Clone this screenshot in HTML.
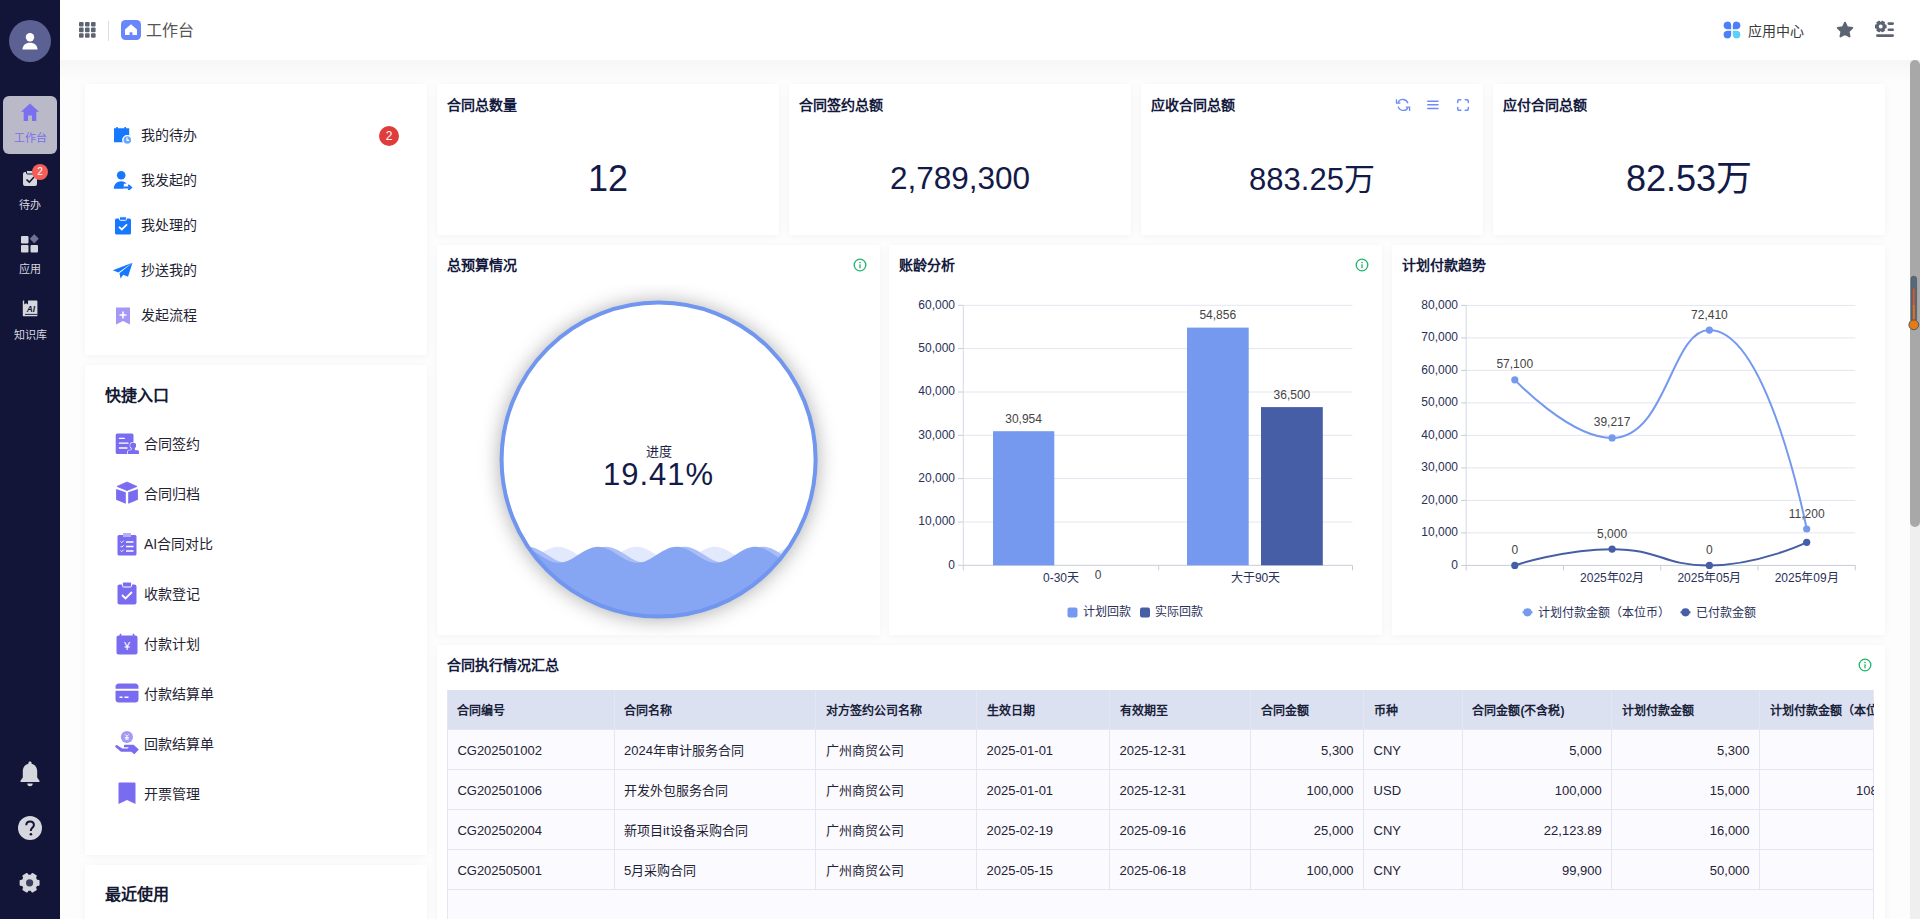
<!DOCTYPE html>
<html lang="zh-CN"><head><meta charset="utf-8"><title>工作台</title>
<style>
*{box-sizing:border-box;margin:0;padding:0}
html,body{width:1920px;height:919px;overflow:hidden;background:#fff;font-family:"Liberation Sans", sans-serif;color:#1b1f3b}
.abs{position:absolute}
.card{position:absolute;background:#fff;box-shadow:0 1px 8px rgba(0,0,0,0.045)}
.t{position:absolute;white-space:nowrap;line-height:1}
</style></head><body>

<div class="abs" style="left:60px;top:60px;width:1850px;height:859px;background:#fdfdfd"></div>
<div class="abs" style="left:60px;top:60px;width:1850px;height:22px;background:linear-gradient(#f6f6f7,rgba(253,253,253,0))"></div>
<div class="abs" style="left:60px;top:0;width:1860px;height:60px;background:#fff"></div>
<div class="card" style="left:85px;top:84px;width:342px;height:271px"></div>
<div class="card" style="left:85px;top:365px;width:342px;height:490px"></div>
<div class="card" style="left:85px;top:865px;width:342px;height:80px"></div>
<div class="card" style="left:437px;top:84px;width:342px;height:151px"></div>
<div class="card" style="left:789px;top:84px;width:342px;height:151px"></div>
<div class="card" style="left:1141px;top:84px;width:342px;height:151px"></div>
<div class="card" style="left:1493px;top:84px;width:392px;height:151px"></div>
<div class="card" style="left:437px;top:245px;width:443px;height:390px"></div>
<div class="card" style="left:889px;top:245px;width:493px;height:390px"></div>
<div class="card" style="left:1392px;top:245px;width:493px;height:390px"></div>
<div class="card" style="left:437px;top:645px;width:1448px;height:300px"></div>
<div class="abs" style="left:0;top:0;width:60px;height:919px;background:#121538"></div>
<div class="abs" style="left:9px;top:20px;width:42px;height:42px;border-radius:50%;background:#5b6192"></div>
<svg class="abs" style="left:20px;top:31px" width="20" height="20" viewBox="0 0 20 20">
<circle cx="10" cy="6.2" r="4.2" fill="#fff"/><path d="M2.5 18.5c0-4.2 3.3-6.8 7.5-6.8s7.5 2.6 7.5 6.8z" fill="#fff"/></svg>
<div class="abs" style="left:3px;top:96px;width:54px;height:58px;border-radius:6px;background:#b9b9c7"></div>
<svg class="abs" style="left:20px;top:102px" width="20" height="20" viewBox="0 0 20 20">
<path d="M10 1.5 L19 9.8 H16.3 V19 H12 V13.5 H8 V19 H3.7 V9.8 H1z" fill="#7a6ff0"/></svg>
<div class="t" style="left:0;width:60px;text-align:center;top:133px;font-size:11px;color:#7a6ff0">工作台</div>
<svg class="abs" style="left:22px;top:169px" width="17" height="18" viewBox="0 0 17 18">
<rect x="1" y="3" width="14" height="14" rx="2" fill="#d5d6de"/><rect x="4.5" y="1.5" width="7" height="3.5" rx="1" fill="#d5d6de" stroke="#121538" stroke-width="1"/>
<path d="M4.5 10.5 L7.3 13.2 L12 8" stroke="#121538" stroke-width="1.6" fill="none"/></svg>
<div class="abs" style="left:32px;top:164px;width:16px;height:16px;border-radius:50%;background:#f25f58"></div>
<div class="t" style="left:32px;width:16px;text-align:center;top:167px;font-size:10px;color:#fff">2</div>
<div class="t" style="left:0;width:60px;text-align:center;top:200px;font-size:11px;color:#d8d8e0">待办</div>
<svg class="abs" style="left:20px;top:234px" width="20" height="19" viewBox="0 0 20 19">
<rect x="1" y="2" width="7.5" height="7.5" rx="1" fill="#d5d6de"/><rect x="11" y="1.5" width="6.5" height="6.5" rx="0.5" transform="rotate(45 14.25 4.75)" fill="#6f7292"/>
<rect x="1" y="11" width="7.5" height="7.5" rx="1" fill="#d5d6de"/><rect x="10.5" y="11" width="7.5" height="7.5" rx="1" fill="#d5d6de"/></svg>
<div class="t" style="left:0;width:60px;text-align:center;top:264px;font-size:11px;color:#d8d8e0">应用</div>
<svg class="abs" style="left:22px;top:300px" width="16" height="17" viewBox="0 0 16 17">
<path d="M.8 1.2A.6.6 0 0 1 1.4.6H2.2V4.6L4.1 3.2 6 4.6V.6H14.8A.6.6 0 0 1 15.4 1.2V15.6A.6.6 0 0 1 14.8 16.2H1.4A.6.6 0 0 1 .8 15.6z" fill="#d5d6de"/>
<rect x="3" y="13.9" width="12.4" height="0.9" fill="#121538"/>
<text x="8.9" y="11.9" font-family="Liberation Sans" font-weight="bold" font-style="italic" font-size="8.3" fill="#121538" text-anchor="middle">AI</text></svg>
<div class="t" style="left:0;width:60px;text-align:center;top:330px;font-size:11px;color:#d8d8e0">知识库</div>
<svg class="abs" style="left:19px;top:760px" width="22" height="27" viewBox="0 0 22 27">
<path d="M11 1.5c1 0 1.6.7 1.6 1.6v.6c3.6.9 5.6 3.9 5.6 7.6v6.2l2.3 3.2v1.3H1.5v-1.3l2.3-3.2v-6.2c0-3.7 2-6.7 5.6-7.6v-.6c0-.9.6-1.6 1.6-1.6z" fill="#d5d6de"/>
<path d="M8.3 23.5h5.4a2.7 2.7 0 0 1-5.4 0z" fill="#d5d6de"/></svg>
<svg class="abs" style="left:18px;top:816px" width="24" height="24" viewBox="0 0 24 24">
<circle cx="12" cy="12" r="12" fill="#d5d6de"/>
<path d="M8.3 9.3c0-2.3 1.6-3.8 3.8-3.8s3.8 1.5 3.8 3.5c0 2.6-3 2.9-3 5.3v.6" stroke="#121538" stroke-width="2" fill="none"/><circle cx="12.9" cy="18.2" r="1.3" fill="#121538"/></svg>
<svg class="abs" style="left:18px;top:871px" width="24" height="24" viewBox="0 0 24 24"><polygon points="20.76,9.69 20.76,13.91 18.60,14.21 17.18,16.65 18.01,18.67 14.35,20.79 13.01,19.06 10.19,19.06 8.85,20.79 5.19,18.67 6.02,16.65 4.60,14.21 2.44,13.91 2.44,9.69 4.60,9.39 6.02,6.95 5.19,4.93 8.85,2.81 10.19,4.54 13.01,4.54 14.35,2.81 18.01,4.93 17.18,6.95 18.60,9.39" fill="#d5d6de" stroke="#d5d6de" stroke-width="1.6" stroke-linejoin="round"/><circle cx="11.6" cy="11.8" r="3.6" fill="#3b3e5e"/></svg>
<svg class="abs" style="left:78.5px;top:22px" width="17" height="16" viewBox="0 0 17 16"><rect x="0" y="0.0" width="4.6" height="4.6" rx="1" fill="#5c6372"/><rect x="6" y="0.0" width="4.6" height="4.6" rx="1" fill="#5c6372"/><rect x="12" y="0.0" width="4.6" height="4.6" rx="1" fill="#5c6372"/><rect x="0" y="5.6" width="4.6" height="4.6" rx="1" fill="#5c6372"/><rect x="6" y="5.6" width="4.6" height="4.6" rx="1" fill="#5c6372"/><rect x="12" y="5.6" width="4.6" height="4.6" rx="1" fill="#5c6372"/><rect x="0" y="11.2" width="4.6" height="4.6" rx="1" fill="#5c6372"/><rect x="6" y="11.2" width="4.6" height="4.6" rx="1" fill="#5c6372"/><rect x="12" y="11.2" width="4.6" height="4.6" rx="1" fill="#5c6372"/></svg>
<div class="abs" style="left:108px;top:21px;width:1px;height:20px;background:#dedede"></div>
<svg class="abs" style="left:121px;top:20px" width="20" height="20" viewBox="0 0 20 20">
<rect width="20" height="20" rx="4.5" fill="#6a86fb"/><path d="M10 4.3 L16 9.4 V15 H11.4 V12.2 H8.6 V15 H4 V9.4z" fill="#fff"/></svg>
<div class="t" style="left:146px;top:22.5px;font-size:16px;color:#555">工作台</div>
<svg class="abs" style="left:1723px;top:21px" width="18" height="18" viewBox="0 0 18 18">
<path d="M8.2 8.2H4A3.8 3.8 0 1 1 8.2 4z" fill="#4f7ff8"/><path d="M9.8 8.2H14A3.8 3.8 0 1 0 9.8 4z" fill="#4f7ff8"/>
<path d="M8.2 9.8H4A3.8 3.8 0 1 0 8.2 14z" fill="#4f7ff8"/><path d="M9.8 9.8H14A3.8 3.8 0 1 1 9.8 14z" fill="#5ccffa"/></svg>
<div class="t" style="left:1748px;top:24px;font-size:14px;color:#3a3a3a">应用中心</div>
<svg class="abs" style="left:1836px;top:21px" width="18" height="18" viewBox="0 0 24 24">
<path d="M12 2.2l2.9 6.2 6.8.8-5 4.7 1.3 6.7L12 17.3l-6 3.3 1.3-6.7-5-4.7 6.8-.8z" fill="#5c6372" stroke="#5c6372" stroke-width="2.6" stroke-linejoin="round"/></svg>
<svg class="abs" style="left:1875px;top:20px" width="20" height="19" viewBox="0 0 20 19">
<polygon points="10.77,5.33 10.77,7.67 9.58,7.83 8.79,9.19 9.25,10.30 7.22,11.47 6.48,10.52 4.92,10.52 4.18,11.47 2.15,10.30 2.61,9.19 1.82,7.83 0.63,7.67 0.63,5.33 1.82,5.17 2.61,3.81 2.15,2.70 4.18,1.53 4.92,2.48 6.48,2.48 7.22,1.53 9.25,2.70 8.79,3.81 9.58,5.17" fill="#5c6372" stroke="#5c6372" stroke-width="1.6" stroke-linejoin="round"/><circle cx="5.7" cy="6.5" r="1.9" fill="#fff"/>
<rect x="12.5" y="2.3" width="6.5" height="2.6" rx="1.3" fill="#5c6372"/><rect x="12.5" y="8.5" width="6.5" height="2.6" rx="1.3" fill="#5c6372"/>
<rect x="1" y="14.2" width="18" height="2.8" rx="1.4" fill="#5c6372"/></svg>
<div class="abs" style="left:1910px;top:60px;width:10px;height:859px;background:#efefef"></div>
<div class="abs" style="left:1910px;top:60px;width:10px;height:467px;border-radius:5px;background:#a8a8a8"></div>
<svg class="abs" style="left:1906px;top:275px" width="14" height="57" viewBox="0 0 14 57">
<rect x="5" y="1.2" width="5.6" height="46" rx="2.8" fill="#56687a" stroke="#4a5a6a" stroke-width="0.8"/>
<path d="M6.9 13.5h1.8V47H6.9z" fill="#e4541e"/><path d="M6.9 30h1.8V47H6.9z" fill="#e8700f"/>
<circle cx="7.8" cy="49.8" r="4.9" fill="#e97a0d" stroke="#4a5a6a" stroke-width="1"/></svg>
<svg class="abs" style="left:113px;top:126px" width="20" height="19" viewBox="0 0 20 19">
<path d="M1 2.2h2.2V1h1.6v1.2h6.6V1H13v1.2h3.2v7.3a5 5 0 0 0-6.3 6.8H1z" fill="#1677ff"/>
<circle cx="14.3" cy="14" r="4.4" fill="#6aa6ff" stroke="#fff" stroke-width="1.2"/><path d="M14 11.6v2.8h2" stroke="#fff" stroke-width="1.1" fill="none"/></svg>
<svg class="abs" style="left:113px;top:170px" width="20" height="20" viewBox="0 0 20 20">
<circle cx="8.2" cy="5.2" r="4.3" fill="#1677ff"/><path d="M0.8 18.8c0-4.5 3.2-7.6 7.4-7.6 2.4 0 4.3.9 5.6 2.4l-3 .2v5z" fill="#1677ff"/>
<path d="M11.5 17.5h6.5M15.8 15.4l2.4 2.1-2.4 2.1" stroke="#1677ff" stroke-width="1.8" fill="none" stroke-linecap="round"/></svg>
<svg class="abs" style="left:114px;top:216px" width="18" height="19" viewBox="0 0 18 19">
<rect x="1" y="2.5" width="16" height="16" rx="1.5" fill="#1677ff"/><rect x="5.5" y="0.8" width="7" height="3.5" rx="1" fill="#1677ff" stroke="#fff" stroke-width="1"/>
<path d="M5 10.8l2.8 2.7 5.2-5.2" stroke="#fff" stroke-width="1.8" fill="none"/></svg>
<svg class="abs" style="left:112px;top:262px" width="21" height="17" viewBox="0 0 21 17">
<path d="M20.5 0.8L0.8 8.3l5.6 2.2z" fill="#1677ff"/><path d="M20.5 0.8L7.4 11.2l1.2 5.2 2.6-3.6 4.8 1.9z" fill="#1677ff"/></svg>
<svg class="abs" style="left:115px;top:306px" width="16" height="19" viewBox="0 0 16 19">
<path d="M1 1.5h14v17l-7-3.6-7 3.6z" fill="#a597f6"/><path d="M8 5.5v7M4.5 9h7" stroke="#fff" stroke-width="1.6"/></svg>
<div class="t" style="left:141px;top:127px;font-size:14px;line-height:16px;color:#1f2333">我的待办</div>
<div class="t" style="left:141px;top:172px;font-size:14px;line-height:16px;color:#1f2333">我发起的</div>
<div class="t" style="left:141px;top:217px;font-size:14px;line-height:16px;color:#1f2333">我处理的</div>
<div class="t" style="left:141px;top:262px;font-size:14px;line-height:16px;color:#1f2333">抄送我的</div>
<div class="t" style="left:141px;top:307px;font-size:14px;line-height:16px;color:#1f2333">发起流程</div>
<div class="abs" style="left:379px;top:126px;width:20px;height:20px;border-radius:50%;background:#e03c3c"></div>
<div class="t" style="left:379px;width:20px;text-align:center;top:129px;font-size:12px;line-height:14px;color:#fff">2</div>
<div class="t" style="left:105px;top:386px;font-size:16px;line-height:20px;font-weight:bold;color:#141833">快捷入口</div>
<svg class="abs" style="left:115px;top:433px" width="25" height="23" viewBox="0 0 25 23">
<rect x="0.7" y="0.4" width="17.8" height="20.6" rx="1.5" fill="#7a6cf0"/>
<path d="M4.4 5.3h5M4.4 10.2h8.6M4.4 15h7.6" stroke="#fff" stroke-width="1.3" stroke-linecap="round"/>
<g fill="#7a6cf0" stroke="#fff" stroke-width="1.5" paint-order="stroke"><circle cx="18.2" cy="12.6" r="2.8"/>
<path d="M16.8 15.2h2.8l.5 2.2h2.5a1.3 1.3 0 0 1 1.3 1.3v2.3H13v-2.3a1.3 1.3 0 0 1 1.3-1.3h2.2z"/></g>
<circle cx="18.2" cy="12.6" r="2.8" fill="#7a6cf0"/><path d="M16.8 15.2h2.8l.5 2.2h2.5a1.3 1.3 0 0 1 1.3 1.3v2.3H13v-2.3a1.3 1.3 0 0 1 1.3-1.3h2.2z" fill="#7a6cf0"/></svg>
<svg class="abs" style="left:110px;top:475px" width="35" height="35" viewBox="0 0 35 35">
<path d="M17 7L27 11.4 17 15.6 7 11.4z" fill="#7a6cf0" stroke="#7a6cf0" stroke-width="0.8" stroke-linejoin="round"/>
<path d="M6.1 13.9L15.8 17.3V28.8L6.1 24.8z" fill="#7a6cf0"/><path d="M27.9 13.9L18.2 17.3V28.8l9.7-4z" fill="#7a6cf0"/></svg>
<svg class="abs" style="left:117px;top:532px" width="20" height="24" viewBox="0 0 20 24">
<rect x="0.5" y="3" width="19" height="20.5" rx="1.5" fill="#7a6cf0"/><path d="M6 1h8v4H6z" fill="#b7aef7"/>
<path d="M3.5 9.5l1.2 1.2 2-2M3.5 14l1.2 1.2 2-2M3.5 18.5l1.2 1.2 2-2" stroke="#fff" stroke-width="1" fill="none"/>
<path d="M9 10h7.5M9 14.5h7.5M9 19h7.5" stroke="#fff" stroke-width="1.3"/></svg>
<svg class="abs" style="left:117px;top:581px" width="20" height="24" viewBox="0 0 20 24">
<rect x="0.5" y="3.5" width="19" height="20" rx="2" fill="#7a6cf0"/><rect x="5.5" y="1" width="9" height="5" rx="1.2" fill="#7a6cf0" stroke="#fff" stroke-width="1"/>
<path d="M5 14l3.5 3.5 6.5-6.5" stroke="#fff" stroke-width="1.8" fill="none"/></svg>
<svg class="abs" style="left:116px;top:633px" width="22" height="22" viewBox="0 0 22 22">
<rect x="0.5" y="2.5" width="21" height="19" rx="2" fill="#7a6cf0"/><path d="M4.5 0.8v3.5M17.5 0.8v3.5" stroke="#7a6cf0" stroke-width="1.6"/>
<text x="11" y="17.3" font-family="Liberation Sans" font-size="11" fill="#fff" text-anchor="middle">¥</text></svg>
<svg class="abs" style="left:115px;top:683px" width="24" height="20" viewBox="0 0 24 20">
<path d="M0.5 4a3.5 3.5 0 0 1 3.5-3.5h16a3.5 3.5 0 0 1 3.5 3.5v1.8H0.5z" fill="#7a6cf0"/>
<path d="M0.5 7.8h23V16a3.5 3.5 0 0 1-3.5 3.5H4A3.5 3.5 0 0 1 .5 16z" fill="#7a6cf0"/>
<path d="M4.5 14.3h3M9.5 14.3h4" stroke="#fff" stroke-width="1.5"/></svg>
<svg class="abs" style="left:110px;top:725px" width="35" height="35" viewBox="0 0 35 35">
<circle cx="16.9" cy="12" r="6.1" fill="#a39af5"/><path d="M15 9.3l1.9 2.1 1.9-2.1M16.9 11.4v3.6M14.9 12.5h4M14.9 14.1h4" stroke="#fff" stroke-width="0.9" fill="none"/>
<path d="M14.8 19.8H23.6L28.9 24.4 24.4 29.3 21.3 26.8H11L5.6 22.2A1.3 1.3 0 0 1 7.2 20.2L12.2 23.6H17.9L18.7 22.3H15.5A1.25 1.25 0 0 1 14.8 19.8z" fill="#7a6cf0"/></svg>
<svg class="abs" style="left:118px;top:782px" width="18" height="23" viewBox="0 0 18 23">
<path d="M0.5 1.5A1 1 0 0 1 1.5 .5h15a1 1 0 0 1 1 1V22l-8.5-4-8.5 4z" fill="#7a6cf0"/></svg>
<div class="t" style="left:144px;top:436px;font-size:14px;line-height:16px;color:#1f2333">合同签约</div>
<div class="t" style="left:144px;top:486px;font-size:14px;line-height:16px;color:#1f2333">合同归档</div>
<div class="t" style="left:144px;top:536px;font-size:14px;line-height:16px;color:#1f2333">AI合同对比</div>
<div class="t" style="left:144px;top:586px;font-size:14px;line-height:16px;color:#1f2333">收款登记</div>
<div class="t" style="left:144px;top:636px;font-size:14px;line-height:16px;color:#1f2333">付款计划</div>
<div class="t" style="left:144px;top:686px;font-size:14px;line-height:16px;color:#1f2333">付款结算单</div>
<div class="t" style="left:144px;top:736px;font-size:14px;line-height:16px;color:#1f2333">回款结算单</div>
<div class="t" style="left:144px;top:786px;font-size:14px;line-height:16px;color:#1f2333">开票管理</div>
<div class="t" style="left:105px;top:885px;font-size:16px;line-height:20px;font-weight:bold;color:#141833">最近使用</div>
<div class="t" style="left:447px;top:97px;font-size:14px;line-height:16px;font-weight:bold;color:#141a3d">合同总数量</div>
<div class="t" style="left:437px;width:342px;text-align:center;top:161.3px;font-size:36px;line-height:36px;color:#131a48">12</div>
<div class="t" style="left:799px;top:97px;font-size:14px;line-height:16px;font-weight:bold;color:#141a3d">合同签约总额</div>
<div class="t" style="left:789px;width:342px;text-align:center;top:163.1px;font-size:31.5px;line-height:31.5px;color:#131a48">2,789,300</div>
<div class="t" style="left:1151px;top:97px;font-size:14px;line-height:16px;font-weight:bold;color:#141a3d">应收合同总额</div>
<div class="t" style="left:1141px;width:342px;text-align:center;top:163.6px;font-size:31px;line-height:31px;color:#131a48">883.25万</div>
<div class="t" style="left:1503px;top:97px;font-size:14px;line-height:16px;font-weight:bold;color:#141a3d">应付合同总额</div>
<div class="t" style="left:1493px;width:392px;text-align:center;top:161.2px;font-size:36px;line-height:36px;color:#131a48">82.53万</div>
<svg class="abs" style="left:1395px;top:98px" width="16" height="14" viewBox="0 0 16 14">
<path d="M12.9 5.2A5.3 5.3 0 0 0 3.2 4.2M3.2 8.6A5.3 5.3 0 0 0 13 9.6" stroke="#6f8bf8" stroke-width="1.3" fill="none"/>
<path d="M1.5 1.2v3.8h3.8M14.6 13v-3.8h-3.8" stroke="#6f8bf8" stroke-width="1.3" fill="none"/></svg>
<svg class="abs" style="left:1426px;top:98px" width="14" height="14" viewBox="0 0 14 14">
<path d="M1.8 3.3h10.2M1.8 6.7h10.2M1.8 10.4h10.2" stroke="#6f8bf8" stroke-width="1.5" stroke-linecap="round"/></svg>
<svg class="abs" style="left:1456px;top:98px" width="14" height="14" viewBox="0 0 14 14">
<path d="M1.7 4.5V3.2a1.5 1.5 0 0 1 1.5-1.5h1.6M9.2 1.7h1.6a1.5 1.5 0 0 1 1.5 1.5v1.3M12.3 9.5v1.3a1.5 1.5 0 0 1-1.5 1.5H9.2M4.8 12.3H3.2a1.5 1.5 0 0 1-1.5-1.5V9.5" stroke="#6f8bf8" stroke-width="1.5" fill="none" stroke-linecap="round"/></svg>
<div class="t" style="left:447px;top:257px;font-size:14px;line-height:16px;font-weight:bold;color:#141a3d">总预算情况</div>
<div class="t" style="left:899px;top:257px;font-size:14px;line-height:16px;font-weight:bold;color:#141a3d">账龄分析</div>
<div class="t" style="left:1402px;top:257px;font-size:14px;line-height:16px;font-weight:bold;color:#141a3d">计划付款趋势</div>
<div class="t" style="left:447px;top:657px;font-size:14px;line-height:16px;font-weight:bold;color:#141a3d">合同执行情况汇总</div>
<svg class="abs" style="left:853px;top:258px" width="14" height="14" viewBox="0 0 14 14">
<circle cx="7" cy="7" r="5.8" stroke="#1fb46e" stroke-width="1.3" fill="none"/><circle cx="7" cy="4.6" r="0.8" fill="#1fb46e"/><path d="M7 6.3v4" stroke="#1fb46e" stroke-width="1.3"/></svg>
<svg class="abs" style="left:1355px;top:258px" width="14" height="14" viewBox="0 0 14 14">
<circle cx="7" cy="7" r="5.8" stroke="#1fb46e" stroke-width="1.3" fill="none"/><circle cx="7" cy="4.6" r="0.8" fill="#1fb46e"/><path d="M7 6.3v4" stroke="#1fb46e" stroke-width="1.3"/></svg>
<svg class="abs" style="left:1858px;top:658px" width="14" height="14" viewBox="0 0 14 14">
<circle cx="7" cy="7" r="5.8" stroke="#1fb46e" stroke-width="1.3" fill="none"/><circle cx="7" cy="4.6" r="0.8" fill="#1fb46e"/><path d="M7 6.3v4" stroke="#1fb46e" stroke-width="1.3"/></svg>
<svg class="abs" style="left:0;top:0" width="1920" height="919" viewBox="0 0 1920 919"><defs><clipPath id="lc"><circle cx="658.6" cy="459.6" r="156"/></clipPath><filter id="sh" x="-30%" y="-30%" width="160%" height="160%"><feGaussianBlur stdDeviation="10"/></filter><clipPath id="shc"><rect x="437" y="284.6" width="443" height="350"/></clipPath></defs>
<g clip-path="url(#shc)"><circle cx="658.6" cy="460.6" r="159" fill="rgba(0,0,0,0.32)" filter="url(#sh)"/></g>
<circle cx="658.6" cy="459.6" r="158" fill="#fff"/>
<g clip-path="url(#lc)">
<path d="M490,640 L490.0,549.46 L492.0,550.48 L494.0,551.61 L496.0,552.82 L498.0,554.08 L500.0,555.36 L502.0,556.62 L504.0,557.84 L506.0,558.98 L508.0,560.02 L510.0,560.92 L512.0,561.66 L514.0,562.23 L516.0,562.61 L518.0,562.79 L520.0,562.76 L522.0,562.53 L524.0,562.10 L526.0,561.49 L528.0,560.71 L530.0,559.77 L532.0,558.71 L534.0,557.54 L536.0,556.31 L538.0,555.04 L540.0,553.76 L542.0,552.51 L544.0,551.32 L546.0,550.22 L548.0,549.23 L550.0,548.38 L552.0,547.70 L554.0,547.21 L556.0,546.90 L558.0,546.80 L560.0,546.90 L562.0,547.21 L564.0,547.70 L566.0,548.38 L568.0,549.23 L570.0,550.22 L572.0,551.32 L574.0,552.51 L576.0,553.76 L578.0,555.04 L580.0,556.31 L582.0,557.54 L584.0,558.71 L586.0,559.77 L588.0,560.71 L590.0,561.49 L592.0,562.10 L594.0,562.53 L596.0,562.76 L598.0,562.79 L600.0,562.61 L602.0,562.23 L604.0,561.66 L606.0,560.92 L608.0,560.02 L610.0,558.98 L612.0,557.84 L614.0,556.62 L616.0,555.36 L618.0,554.08 L620.0,552.82 L622.0,551.61 L624.0,550.48 L626.0,549.46 L628.0,548.58 L630.0,547.86 L632.0,547.31 L634.0,546.96 L636.0,546.81 L638.0,546.86 L640.0,547.11 L642.0,547.56 L644.0,548.20 L646.0,549.00 L648.0,549.96 L650.0,551.03 L652.0,552.21 L654.0,553.45 L656.0,554.72 L658.0,556.00 L660.0,557.24 L662.0,558.42 L664.0,559.52 L666.0,560.49 L668.0,561.31 L670.0,561.97 L672.0,562.44 L674.0,562.72 L676.0,562.80 L678.0,562.67 L680.0,562.34 L682.0,561.82 L684.0,561.12 L686.0,560.26 L688.0,559.25 L690.0,558.14 L692.0,556.93 L694.0,555.68 L696.0,554.40 L698.0,553.13 L700.0,551.91 L702.0,550.75 L704.0,549.71 L706.0,548.79 L708.0,548.02 L710.0,547.43 L712.0,547.03 L714.0,546.83 L716.0,546.83 L718.0,547.03 L720.0,547.43 L722.0,548.02 L724.0,548.79 L726.0,549.71 L728.0,550.75 L730.0,551.91 L732.0,553.13 L734.0,554.40 L736.0,555.68 L738.0,556.93 L740.0,558.14 L742.0,559.25 L744.0,560.26 L746.0,561.12 L748.0,561.82 L750.0,562.34 L752.0,562.67 L754.0,562.80 L756.0,562.72 L758.0,562.44 L760.0,561.97 L762.0,561.31 L764.0,560.49 L766.0,559.52 L768.0,558.42 L770.0,557.24 L772.0,556.00 L774.0,554.72 L776.0,553.45 L778.0,552.21 L780.0,551.03 L782.0,549.96 L784.0,549.00 L786.0,548.20 L788.0,547.56 L790.0,547.11 L792.0,546.86 L794.0,546.81 L796.0,546.96 L798.0,547.31 L800.0,547.86 L802.0,548.58 L804.0,549.46 L806.0,550.48 L808.0,551.61 L810.0,552.82 L812.0,554.08 L814.0,555.36 L816.0,556.62 L818.0,557.84 L820.0,558.98 L822.0,560.02 L824.0,560.92 L826.0,561.66 L828.0,562.23 L830.0,562.61 L830,640z" fill="#e2e9fc"/>
<path d="M490,640 L490.0,562.72 L492.0,562.44 L494.0,561.97 L496.0,561.31 L498.0,560.49 L500.0,559.52 L502.0,558.42 L504.0,557.24 L506.0,556.00 L508.0,554.72 L510.0,553.45 L512.0,552.21 L514.0,551.03 L516.0,549.96 L518.0,549.00 L520.0,548.20 L522.0,547.56 L524.0,547.11 L526.0,546.86 L528.0,546.81 L530.0,546.96 L532.0,547.31 L534.0,547.86 L536.0,548.58 L538.0,549.46 L540.0,550.48 L542.0,551.61 L544.0,552.82 L546.0,554.08 L548.0,555.36 L550.0,556.62 L552.0,557.84 L554.0,558.98 L556.0,560.02 L558.0,560.92 L560.0,561.66 L562.0,562.23 L564.0,562.61 L566.0,562.79 L568.0,562.76 L570.0,562.53 L572.0,562.10 L574.0,561.49 L576.0,560.71 L578.0,559.77 L580.0,558.71 L582.0,557.54 L584.0,556.31 L586.0,555.04 L588.0,553.76 L590.0,552.51 L592.0,551.32 L594.0,550.22 L596.0,549.23 L598.0,548.38 L600.0,547.70 L602.0,547.21 L604.0,546.90 L606.0,546.80 L608.0,546.90 L610.0,547.21 L612.0,547.70 L614.0,548.38 L616.0,549.23 L618.0,550.22 L620.0,551.32 L622.0,552.51 L624.0,553.76 L626.0,555.04 L628.0,556.31 L630.0,557.54 L632.0,558.71 L634.0,559.77 L636.0,560.71 L638.0,561.49 L640.0,562.10 L642.0,562.53 L644.0,562.76 L646.0,562.79 L648.0,562.61 L650.0,562.23 L652.0,561.66 L654.0,560.92 L656.0,560.02 L658.0,558.98 L660.0,557.84 L662.0,556.62 L664.0,555.36 L666.0,554.08 L668.0,552.82 L670.0,551.61 L672.0,550.48 L674.0,549.46 L676.0,548.58 L678.0,547.86 L680.0,547.31 L682.0,546.96 L684.0,546.81 L686.0,546.86 L688.0,547.11 L690.0,547.56 L692.0,548.20 L694.0,549.00 L696.0,549.96 L698.0,551.03 L700.0,552.21 L702.0,553.45 L704.0,554.72 L706.0,556.00 L708.0,557.24 L710.0,558.42 L712.0,559.52 L714.0,560.49 L716.0,561.31 L718.0,561.97 L720.0,562.44 L722.0,562.72 L724.0,562.80 L726.0,562.67 L728.0,562.34 L730.0,561.82 L732.0,561.12 L734.0,560.26 L736.0,559.25 L738.0,558.14 L740.0,556.93 L742.0,555.68 L744.0,554.40 L746.0,553.13 L748.0,551.91 L750.0,550.75 L752.0,549.71 L754.0,548.79 L756.0,548.02 L758.0,547.43 L760.0,547.03 L762.0,546.83 L764.0,546.83 L766.0,547.03 L768.0,547.43 L770.0,548.02 L772.0,548.79 L774.0,549.71 L776.0,550.75 L778.0,551.91 L780.0,553.13 L782.0,554.40 L784.0,555.68 L786.0,556.93 L788.0,558.14 L790.0,559.25 L792.0,560.26 L794.0,561.12 L796.0,561.82 L798.0,562.34 L800.0,562.67 L802.0,562.80 L804.0,562.72 L806.0,562.44 L808.0,561.97 L810.0,561.31 L812.0,560.49 L814.0,559.52 L816.0,558.42 L818.0,557.24 L820.0,556.00 L822.0,554.72 L824.0,553.45 L826.0,552.21 L828.0,551.03 L830.0,549.96 L830,640z" fill="#a9bef6"/>
<path d="M490,640 L490.0,560.49 L492.0,559.52 L494.0,558.42 L496.0,557.24 L498.0,556.00 L500.0,554.72 L502.0,553.45 L504.0,552.21 L506.0,551.03 L508.0,549.96 L510.0,549.00 L512.0,548.20 L514.0,547.56 L516.0,547.11 L518.0,546.86 L520.0,546.81 L522.0,546.96 L524.0,547.31 L526.0,547.86 L528.0,548.58 L530.0,549.46 L532.0,550.48 L534.0,551.61 L536.0,552.82 L538.0,554.08 L540.0,555.36 L542.0,556.62 L544.0,557.84 L546.0,558.98 L548.0,560.02 L550.0,560.92 L552.0,561.66 L554.0,562.23 L556.0,562.61 L558.0,562.79 L560.0,562.76 L562.0,562.53 L564.0,562.10 L566.0,561.49 L568.0,560.71 L570.0,559.77 L572.0,558.71 L574.0,557.54 L576.0,556.31 L578.0,555.04 L580.0,553.76 L582.0,552.51 L584.0,551.32 L586.0,550.22 L588.0,549.23 L590.0,548.38 L592.0,547.70 L594.0,547.21 L596.0,546.90 L598.0,546.80 L600.0,546.90 L602.0,547.21 L604.0,547.70 L606.0,548.38 L608.0,549.23 L610.0,550.22 L612.0,551.32 L614.0,552.51 L616.0,553.76 L618.0,555.04 L620.0,556.31 L622.0,557.54 L624.0,558.71 L626.0,559.77 L628.0,560.71 L630.0,561.49 L632.0,562.10 L634.0,562.53 L636.0,562.76 L638.0,562.79 L640.0,562.61 L642.0,562.23 L644.0,561.66 L646.0,560.92 L648.0,560.02 L650.0,558.98 L652.0,557.84 L654.0,556.62 L656.0,555.36 L658.0,554.08 L660.0,552.82 L662.0,551.61 L664.0,550.48 L666.0,549.46 L668.0,548.58 L670.0,547.86 L672.0,547.31 L674.0,546.96 L676.0,546.81 L678.0,546.86 L680.0,547.11 L682.0,547.56 L684.0,548.20 L686.0,549.00 L688.0,549.96 L690.0,551.03 L692.0,552.21 L694.0,553.45 L696.0,554.72 L698.0,556.00 L700.0,557.24 L702.0,558.42 L704.0,559.52 L706.0,560.49 L708.0,561.31 L710.0,561.97 L712.0,562.44 L714.0,562.72 L716.0,562.80 L718.0,562.67 L720.0,562.34 L722.0,561.82 L724.0,561.12 L726.0,560.26 L728.0,559.25 L730.0,558.14 L732.0,556.93 L734.0,555.68 L736.0,554.40 L738.0,553.13 L740.0,551.91 L742.0,550.75 L744.0,549.71 L746.0,548.79 L748.0,548.02 L750.0,547.43 L752.0,547.03 L754.0,546.83 L756.0,546.83 L758.0,547.03 L760.0,547.43 L762.0,548.02 L764.0,548.79 L766.0,549.71 L768.0,550.75 L770.0,551.91 L772.0,553.13 L774.0,554.40 L776.0,555.68 L778.0,556.93 L780.0,558.14 L782.0,559.25 L784.0,560.26 L786.0,561.12 L788.0,561.82 L790.0,562.34 L792.0,562.67 L794.0,562.80 L796.0,562.72 L798.0,562.44 L800.0,561.97 L802.0,561.31 L804.0,560.49 L806.0,559.52 L808.0,558.42 L810.0,557.24 L812.0,556.00 L814.0,554.72 L816.0,553.45 L818.0,552.21 L820.0,551.03 L822.0,549.96 L824.0,549.00 L826.0,548.20 L828.0,547.56 L830.0,547.11 L830,640z" fill="#86a5f2"/>
</g>
<circle cx="658.6" cy="459.6" r="157" fill="none" stroke="#7096f0" stroke-width="4"/>
<text x="658.6" y="456" font-family="Liberation Sans, sans-serif" font-size="13" fill="#1b1f45" text-anchor="middle">进度</text>
<text x="658.6" y="484.5" font-family="Liberation Sans, sans-serif" font-size="31" letter-spacing="1" fill="#131a48" text-anchor="middle">19.41%</text>
<line x1="958" y1="565.3" x2="963.3" y2="565.3" stroke="#c8ccd6" stroke-width="1"/>
<text x="955" y="568.5" font-family="Liberation Sans, sans-serif" font-size="12" fill="#2a3158" text-anchor="end">0</text>
<line x1="963.3" y1="522.0" x2="1352.5" y2="522.0" stroke="#e3e6ef" stroke-width="1"/>
<line x1="958" y1="522.0" x2="963.3" y2="522.0" stroke="#c8ccd6" stroke-width="1"/>
<text x="955" y="525.2" font-family="Liberation Sans, sans-serif" font-size="12" fill="#2a3158" text-anchor="end">10,000</text>
<line x1="963.3" y1="478.6" x2="1352.5" y2="478.6" stroke="#e3e6ef" stroke-width="1"/>
<line x1="958" y1="478.6" x2="963.3" y2="478.6" stroke="#c8ccd6" stroke-width="1"/>
<text x="955" y="481.8" font-family="Liberation Sans, sans-serif" font-size="12" fill="#2a3158" text-anchor="end">20,000</text>
<line x1="963.3" y1="435.3" x2="1352.5" y2="435.3" stroke="#e3e6ef" stroke-width="1"/>
<line x1="958" y1="435.3" x2="963.3" y2="435.3" stroke="#c8ccd6" stroke-width="1"/>
<text x="955" y="438.5" font-family="Liberation Sans, sans-serif" font-size="12" fill="#2a3158" text-anchor="end">30,000</text>
<line x1="963.3" y1="392.0" x2="1352.5" y2="392.0" stroke="#e3e6ef" stroke-width="1"/>
<line x1="958" y1="392.0" x2="963.3" y2="392.0" stroke="#c8ccd6" stroke-width="1"/>
<text x="955" y="395.2" font-family="Liberation Sans, sans-serif" font-size="12" fill="#2a3158" text-anchor="end">40,000</text>
<line x1="963.3" y1="348.6" x2="1352.5" y2="348.6" stroke="#e3e6ef" stroke-width="1"/>
<line x1="958" y1="348.6" x2="963.3" y2="348.6" stroke="#c8ccd6" stroke-width="1"/>
<text x="955" y="351.8" font-family="Liberation Sans, sans-serif" font-size="12" fill="#2a3158" text-anchor="end">50,000</text>
<line x1="963.3" y1="305.3" x2="1352.5" y2="305.3" stroke="#e3e6ef" stroke-width="1"/>
<line x1="958" y1="305.3" x2="963.3" y2="305.3" stroke="#c8ccd6" stroke-width="1"/>
<text x="955" y="308.5" font-family="Liberation Sans, sans-serif" font-size="12" fill="#2a3158" text-anchor="end">60,000</text>
<line x1="963.3" y1="305.3" x2="963.3" y2="565.3" stroke="#d6d9e2" stroke-width="1"/>
<line x1="963.3" y1="565.3" x2="1352.5" y2="565.3" stroke="#c8ccd6" stroke-width="1"/>
<line x1="963.3" y1="565.3" x2="963.3" y2="570.3" stroke="#c8ccd6" stroke-width="1"/>
<line x1="1158.7" y1="565.3" x2="1158.7" y2="570.3" stroke="#c8ccd6" stroke-width="1"/>
<line x1="1352.5" y1="565.3" x2="1352.5" y2="570.3" stroke="#c8ccd6" stroke-width="1"/>
<rect x="993" y="431.2" width="61.3" height="134.1" fill="#7599ef"/>
<text x="1023.6" y="422.7" font-family="Liberation Sans, sans-serif" font-size="12" fill="#444" text-anchor="middle">30,954</text>
<rect x="1187" y="327.6" width="61.7" height="237.7" fill="#7599ef"/>
<text x="1217.8" y="319.1" font-family="Liberation Sans, sans-serif" font-size="12" fill="#444" text-anchor="middle">54,856</text>
<rect x="1261" y="407.1" width="61.8" height="158.2" fill="#455ea6"/>
<text x="1291.9" y="398.6" font-family="Liberation Sans, sans-serif" font-size="12" fill="#444" text-anchor="middle">36,500</text>
<text x="1098" y="579" font-family="Liberation Sans, sans-serif" font-size="12" fill="#444" text-anchor="middle">0</text>
<text x="1061" y="582" font-family="Liberation Sans, sans-serif" font-size="12" fill="#2a3158" text-anchor="middle">0-30天</text>
<text x="1255.6" y="582" font-family="Liberation Sans, sans-serif" font-size="12" fill="#2a3158" text-anchor="middle">大于90天</text>
<rect x="1067.5" y="607.5" width="10" height="10" rx="2" fill="#7599ef"/>
<text x="1083" y="616.3" font-family="Liberation Sans, sans-serif" font-size="12" fill="#2a3158">计划回款</text>
<rect x="1140" y="607.5" width="10" height="10" rx="2" fill="#455ea6"/>
<text x="1155" y="616.3" font-family="Liberation Sans, sans-serif" font-size="12" fill="#2a3158">实际回款</text>
<line x1="1461.2" y1="565.4" x2="1466.2" y2="565.4" stroke="#c8ccd6" stroke-width="1"/>
<text x="1458" y="568.6" font-family="Liberation Sans, sans-serif" font-size="12" fill="#2a3158" text-anchor="end">0</text>
<line x1="1466.2" y1="532.9" x2="1855.3" y2="532.9" stroke="#e3e6ef" stroke-width="1"/>
<line x1="1461.2" y1="532.9" x2="1466.2" y2="532.9" stroke="#c8ccd6" stroke-width="1"/>
<text x="1458" y="536.1" font-family="Liberation Sans, sans-serif" font-size="12" fill="#2a3158" text-anchor="end">10,000</text>
<line x1="1466.2" y1="500.4" x2="1855.3" y2="500.4" stroke="#e3e6ef" stroke-width="1"/>
<line x1="1461.2" y1="500.4" x2="1466.2" y2="500.4" stroke="#c8ccd6" stroke-width="1"/>
<text x="1458" y="503.6" font-family="Liberation Sans, sans-serif" font-size="12" fill="#2a3158" text-anchor="end">20,000</text>
<line x1="1466.2" y1="467.9" x2="1855.3" y2="467.9" stroke="#e3e6ef" stroke-width="1"/>
<line x1="1461.2" y1="467.9" x2="1466.2" y2="467.9" stroke="#c8ccd6" stroke-width="1"/>
<text x="1458" y="471.1" font-family="Liberation Sans, sans-serif" font-size="12" fill="#2a3158" text-anchor="end">30,000</text>
<line x1="1466.2" y1="435.4" x2="1855.3" y2="435.4" stroke="#e3e6ef" stroke-width="1"/>
<line x1="1461.2" y1="435.4" x2="1466.2" y2="435.4" stroke="#c8ccd6" stroke-width="1"/>
<text x="1458" y="438.6" font-family="Liberation Sans, sans-serif" font-size="12" fill="#2a3158" text-anchor="end">40,000</text>
<line x1="1466.2" y1="402.9" x2="1855.3" y2="402.9" stroke="#e3e6ef" stroke-width="1"/>
<line x1="1461.2" y1="402.9" x2="1466.2" y2="402.9" stroke="#c8ccd6" stroke-width="1"/>
<text x="1458" y="406.1" font-family="Liberation Sans, sans-serif" font-size="12" fill="#2a3158" text-anchor="end">50,000</text>
<line x1="1466.2" y1="370.4" x2="1855.3" y2="370.4" stroke="#e3e6ef" stroke-width="1"/>
<line x1="1461.2" y1="370.4" x2="1466.2" y2="370.4" stroke="#c8ccd6" stroke-width="1"/>
<text x="1458" y="373.6" font-family="Liberation Sans, sans-serif" font-size="12" fill="#2a3158" text-anchor="end">60,000</text>
<line x1="1466.2" y1="337.9" x2="1855.3" y2="337.9" stroke="#e3e6ef" stroke-width="1"/>
<line x1="1461.2" y1="337.9" x2="1466.2" y2="337.9" stroke="#c8ccd6" stroke-width="1"/>
<text x="1458" y="341.1" font-family="Liberation Sans, sans-serif" font-size="12" fill="#2a3158" text-anchor="end">70,000</text>
<line x1="1466.2" y1="305.4" x2="1855.3" y2="305.4" stroke="#e3e6ef" stroke-width="1"/>
<line x1="1461.2" y1="305.4" x2="1466.2" y2="305.4" stroke="#c8ccd6" stroke-width="1"/>
<text x="1458" y="308.6" font-family="Liberation Sans, sans-serif" font-size="12" fill="#2a3158" text-anchor="end">80,000</text>
<line x1="1466.2" y1="305.4" x2="1466.2" y2="565.4" stroke="#d6d9e2" stroke-width="1"/>
<line x1="1466.2" y1="565.4" x2="1855.3" y2="565.4" stroke="#c8ccd6" stroke-width="1"/>
<line x1="1466.2" y1="565.4" x2="1466.2" y2="570.4" stroke="#c8ccd6" stroke-width="1"/>
<line x1="1563.5" y1="565.4" x2="1563.5" y2="570.4" stroke="#c8ccd6" stroke-width="1"/>
<line x1="1660.8" y1="565.4" x2="1660.8" y2="570.4" stroke="#c8ccd6" stroke-width="1"/>
<line x1="1758.0" y1="565.4" x2="1758.0" y2="570.4" stroke="#c8ccd6" stroke-width="1"/>
<line x1="1855.3" y1="565.4" x2="1855.3" y2="570.4" stroke="#c8ccd6" stroke-width="1"/>
<text x="1612.1" y="582" font-family="Liberation Sans, sans-serif" font-size="12" fill="#2a3158" text-anchor="middle">2025年02月</text>
<text x="1709.4" y="582" font-family="Liberation Sans, sans-serif" font-size="12" fill="#2a3158" text-anchor="middle">2025年05月</text>
<text x="1806.7" y="582" font-family="Liberation Sans, sans-serif" font-size="12" fill="#2a3158" text-anchor="middle">2025年09月</text>
<path d="M1514.84,565.40 C1514.84,565.40 1563.47,549.15 1612.11,549.15 C1660.75,549.15 1661.08,565.40 1709.39,565.40 C1758.36,565.40 1806.66,542.32 1806.66,542.32" stroke="#455ea6" stroke-width="2" fill="none"/>
<path d="M1514.84,379.82 C1514.84,379.82 1569.48,437.94 1612.11,437.94 C1666.76,437.94 1670.85,330.07 1709.39,330.07 C1768.13,330.07 1806.66,529.00 1806.66,529.00" stroke="#7599ef" stroke-width="2" fill="none"/>
<circle cx="1514.8" cy="565.4" r="3.6" fill="#455ea6"/>
<circle cx="1612.1" cy="549.1" r="3.6" fill="#455ea6"/>
<circle cx="1709.4" cy="565.4" r="3.6" fill="#455ea6"/>
<circle cx="1806.7" cy="542.3" r="3.6" fill="#455ea6"/>
<circle cx="1514.8" cy="379.8" r="3.6" fill="#7599ef"/>
<circle cx="1612.1" cy="437.9" r="3.6" fill="#7599ef"/>
<circle cx="1709.4" cy="330.1" r="3.6" fill="#7599ef"/>
<circle cx="1806.7" cy="529.0" r="3.6" fill="#7599ef"/>
<text x="1514.8" y="368.3" font-family="Liberation Sans, sans-serif" font-size="12" fill="#444" text-anchor="middle">57,100</text>
<text x="1612.1" y="426.4" font-family="Liberation Sans, sans-serif" font-size="12" fill="#444" text-anchor="middle">39,217</text>
<text x="1709.4" y="318.6" font-family="Liberation Sans, sans-serif" font-size="12" fill="#444" text-anchor="middle">72,410</text>
<text x="1806.7" y="517.5" font-family="Liberation Sans, sans-serif" font-size="12" fill="#444" text-anchor="middle">11,200</text>
<text x="1514.8" y="553.9" font-family="Liberation Sans, sans-serif" font-size="12" fill="#444" text-anchor="middle">0</text>
<text x="1612.1" y="537.6" font-family="Liberation Sans, sans-serif" font-size="12" fill="#444" text-anchor="middle">5,000</text>
<text x="1709.4" y="553.9" font-family="Liberation Sans, sans-serif" font-size="12" fill="#444" text-anchor="middle">0</text>
<path d="M1522.5 612.3h10" stroke="#7599ef" stroke-width="2"/><circle cx="1527.5" cy="612.3" r="4.1" fill="#7599ef"/>
<text x="1537.8" y="616.5" font-family="Liberation Sans, sans-serif" font-size="12" fill="#2a3158">计划付款金额（本位币）</text>
<path d="M1680.5 612.3h10" stroke="#455ea6" stroke-width="2"/><circle cx="1685.5" cy="612.3" r="4.1" fill="#455ea6"/>
<text x="1696" y="616.5" font-family="Liberation Sans, sans-serif" font-size="12" fill="#2a3158">已付款金额</text></svg>
<div class="abs" style="left:447px;top:690px;width:1427px;height:229px;overflow:hidden;background:#fafaff">
<div class="abs" style="left:0;top:0;width:1427px;height:40px;background:#dbe1f1"></div>
<div class="abs" style="left:0;top:39px;width:1427px;height:1px;background:#e4e7f3"></div>
<div class="abs" style="left:0;top:79px;width:1427px;height:1px;background:#e4e7f3"></div>
<div class="abs" style="left:0;top:119px;width:1427px;height:1px;background:#e4e7f3"></div>
<div class="abs" style="left:0;top:159px;width:1427px;height:1px;background:#e4e7f3"></div>
<div class="abs" style="left:0;top:199px;width:1427px;height:1px;background:#e4e7f3"></div>
<div class="abs" style="left:166.5px;top:0;width:1px;height:199px;background:#e4e7f3"></div>
<div class="abs" style="left:368.1px;top:0;width:1px;height:199px;background:#e4e7f3"></div>
<div class="abs" style="left:529.1px;top:0;width:1px;height:199px;background:#e4e7f3"></div>
<div class="abs" style="left:662.0px;top:0;width:1px;height:199px;background:#e4e7f3"></div>
<div class="abs" style="left:803.1px;top:0;width:1px;height:199px;background:#e4e7f3"></div>
<div class="abs" style="left:916.1px;top:0;width:1px;height:199px;background:#e4e7f3"></div>
<div class="abs" style="left:1014.9px;top:0;width:1px;height:199px;background:#e4e7f3"></div>
<div class="abs" style="left:1164.2px;top:0;width:1px;height:199px;background:#e4e7f3"></div>
<div class="abs" style="left:1312.1px;top:0;width:1px;height:199px;background:#e4e7f3"></div>
<div class="abs" style="left:0;top:0;width:1px;height:229px;background:#e4e7f3"></div>
<div class="abs" style="left:1426px;top:0;width:1px;height:229px;background:#e4e7f3"></div>
<div class="t" style="left:10.4px;top:13px;font-size:12px;line-height:16px;font-weight:bold;color:#1a1f3a">合同编号</div>
<div class="t" style="left:177.0px;top:13px;font-size:12px;line-height:16px;font-weight:bold;color:#1a1f3a">合同名称</div>
<div class="t" style="left:378.6px;top:13px;font-size:12px;line-height:16px;font-weight:bold;color:#1a1f3a">对方签约公司名称</div>
<div class="t" style="left:539.6px;top:13px;font-size:12px;line-height:16px;font-weight:bold;color:#1a1f3a">生效日期</div>
<div class="t" style="left:672.5px;top:13px;font-size:12px;line-height:16px;font-weight:bold;color:#1a1f3a">有效期至</div>
<div class="t" style="left:813.6px;top:13px;font-size:12px;line-height:16px;font-weight:bold;color:#1a1f3a">合同金额</div>
<div class="t" style="left:926.6px;top:13px;font-size:12px;line-height:16px;font-weight:bold;color:#1a1f3a">币种</div>
<div class="t" style="left:1025.4px;top:13px;font-size:12px;line-height:16px;font-weight:bold;color:#1a1f3a">合同金额(不含税)</div>
<div class="t" style="left:1174.7px;top:13px;font-size:12px;line-height:16px;font-weight:bold;color:#1a1f3a">计划付款金额</div>
<div class="t" style="left:1322.6px;top:13px;font-size:12px;line-height:16px;font-weight:bold;color:#1a1f3a">计划付款金额（本位币）</div>
<div class="t" style="left:10.4px;top:52.5px;font-size:13px;line-height:16px;color:#1f2333">CG202501002</div>
<div class="t" style="left:177.0px;top:52.5px;font-size:13px;line-height:16px;color:#1f2333">2024年审计服务合同</div>
<div class="t" style="left:378.6px;top:52.5px;font-size:13px;line-height:16px;color:#1f2333">广州商贸公司</div>
<div class="t" style="left:539.6px;top:52.5px;font-size:13px;line-height:16px;color:#1f2333">2025-01-01</div>
<div class="t" style="left:672.5px;top:52.5px;font-size:13px;line-height:16px;color:#1f2333">2025-12-31</div>
<div class="t" style="left:803.6px;width:103.0px;text-align:right;top:52.5px;font-size:13px;line-height:16px;color:#1f2333">5,300</div>
<div class="t" style="left:926.6px;top:52.5px;font-size:13px;line-height:16px;color:#1f2333">CNY</div>
<div class="t" style="left:1015.4px;width:139.3px;text-align:right;top:52.5px;font-size:13px;line-height:16px;color:#1f2333">5,000</div>
<div class="t" style="left:1164.7px;width:137.9px;text-align:right;top:52.5px;font-size:13px;line-height:16px;color:#1f2333">5,300</div>
<div class="t" style="left:10.4px;top:92.5px;font-size:13px;line-height:16px;color:#1f2333">CG202501006</div>
<div class="t" style="left:177.0px;top:92.5px;font-size:13px;line-height:16px;color:#1f2333">开发外包服务合同</div>
<div class="t" style="left:378.6px;top:92.5px;font-size:13px;line-height:16px;color:#1f2333">广州商贸公司</div>
<div class="t" style="left:539.6px;top:92.5px;font-size:13px;line-height:16px;color:#1f2333">2025-01-01</div>
<div class="t" style="left:672.5px;top:92.5px;font-size:13px;line-height:16px;color:#1f2333">2025-12-31</div>
<div class="t" style="left:803.6px;width:103.0px;text-align:right;top:92.5px;font-size:13px;line-height:16px;color:#1f2333">100,000</div>
<div class="t" style="left:926.6px;top:92.5px;font-size:13px;line-height:16px;color:#1f2333">USD</div>
<div class="t" style="left:1015.4px;width:139.3px;text-align:right;top:92.5px;font-size:13px;line-height:16px;color:#1f2333">100,000</div>
<div class="t" style="left:1164.7px;width:137.9px;text-align:right;top:92.5px;font-size:13px;line-height:16px;color:#1f2333">15,000</div>
<div class="t" style="left:1312.6px;width:143.4px;text-align:right;top:92.5px;font-size:13px;line-height:16px;color:#1f2333">108,000</div>
<div class="t" style="left:10.4px;top:132.5px;font-size:13px;line-height:16px;color:#1f2333">CG202502004</div>
<div class="t" style="left:177.0px;top:132.5px;font-size:13px;line-height:16px;color:#1f2333">新项目it设备采购合同</div>
<div class="t" style="left:378.6px;top:132.5px;font-size:13px;line-height:16px;color:#1f2333">广州商贸公司</div>
<div class="t" style="left:539.6px;top:132.5px;font-size:13px;line-height:16px;color:#1f2333">2025-02-19</div>
<div class="t" style="left:672.5px;top:132.5px;font-size:13px;line-height:16px;color:#1f2333">2025-09-16</div>
<div class="t" style="left:803.6px;width:103.0px;text-align:right;top:132.5px;font-size:13px;line-height:16px;color:#1f2333">25,000</div>
<div class="t" style="left:926.6px;top:132.5px;font-size:13px;line-height:16px;color:#1f2333">CNY</div>
<div class="t" style="left:1015.4px;width:139.3px;text-align:right;top:132.5px;font-size:13px;line-height:16px;color:#1f2333">22,123.89</div>
<div class="t" style="left:1164.7px;width:137.9px;text-align:right;top:132.5px;font-size:13px;line-height:16px;color:#1f2333">16,000</div>
<div class="t" style="left:10.4px;top:172.5px;font-size:13px;line-height:16px;color:#1f2333">CG202505001</div>
<div class="t" style="left:177.0px;top:172.5px;font-size:13px;line-height:16px;color:#1f2333">5月采购合同</div>
<div class="t" style="left:378.6px;top:172.5px;font-size:13px;line-height:16px;color:#1f2333">广州商贸公司</div>
<div class="t" style="left:539.6px;top:172.5px;font-size:13px;line-height:16px;color:#1f2333">2025-05-15</div>
<div class="t" style="left:672.5px;top:172.5px;font-size:13px;line-height:16px;color:#1f2333">2025-06-18</div>
<div class="t" style="left:803.6px;width:103.0px;text-align:right;top:172.5px;font-size:13px;line-height:16px;color:#1f2333">100,000</div>
<div class="t" style="left:926.6px;top:172.5px;font-size:13px;line-height:16px;color:#1f2333">CNY</div>
<div class="t" style="left:1015.4px;width:139.3px;text-align:right;top:172.5px;font-size:13px;line-height:16px;color:#1f2333">99,900</div>
<div class="t" style="left:1164.7px;width:137.9px;text-align:right;top:172.5px;font-size:13px;line-height:16px;color:#1f2333">50,000</div>
</div>
</body></html>
